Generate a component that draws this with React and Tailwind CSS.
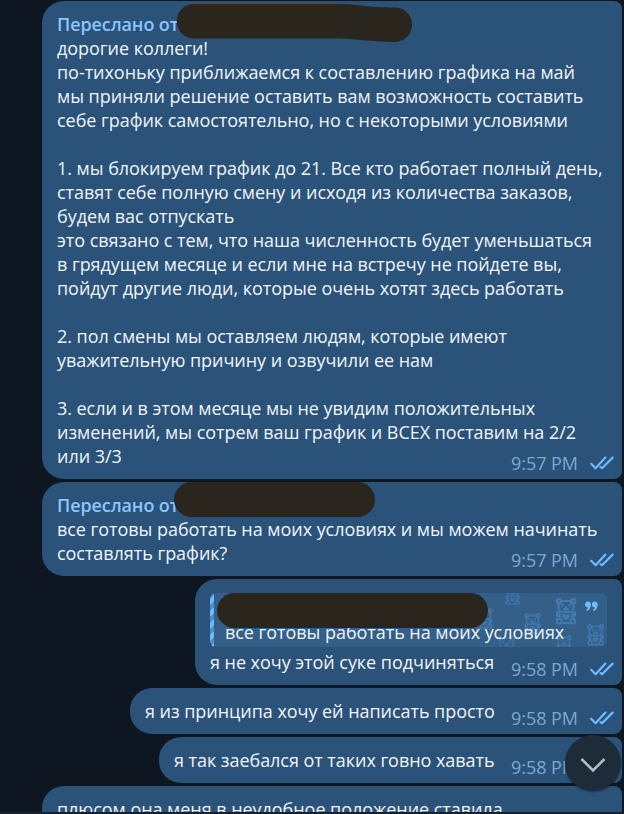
import React from "react";

const Checks = () => {
  return (
    <svg width="25" height="14" viewBox="0 0 25 14" fill="none">
      <path
        d="M1.200 7.800l4.400 4.400L15.400 1.600M10.600 11.200l1.400 1L22.600 1.600"
        stroke="#6cbcff"
        strokeWidth="2.2"
        strokeLinecap="round"
        strokeLinejoin="round"
      />
    </svg>
  );
};

const Meta = ({ time }) => {
  return (
    <div className="absolute right-[7px] bottom-[4px] flex items-center">
      <span className="w-[79px] text-[18px] tracking-[-0.05px] leading-6 text-[#7da8d3] whitespace-nowrap">
        {time}
      </span>
      <Checks />
    </div>
  );
};

// 20x27 teddy with a heart on its belly
const Bear = ({ x, y, s = 1, o = 1 }) => {
  return (
    <g transform={`translate(${x} ${y}) scale(${s})`} opacity={o}>
      <circle cx="3.500" cy="3.500" r="2.300" />
      <circle cx="17.500" cy="3.500" r="2.300" />
      <rect x="3" y="3" width="15" height="11" rx="4" />
      <path d="M4 15.500l-2.500-1.500v3.500l2.500 1M17 15.500l2.500-1.500v3.500l-2.500 1" />
      <path d="M4 15v6M17 15v6" />
      <rect x="1.500" y="20.500" width="4.500" height="5" rx="1.500" />
      <rect x="15" y="20.500" width="4.500" height="5" rx="1.500" />
      <path d="M6 25h9" />
      <path d="M7 7.200v.6M14 7.200v.6M8.500 11c1.300.8 2.700.8 4 0M10.500 9v1" />
      <path
        d="M10.500 22.500c-2.500-1.700-3.800-3-3.800-4.500 0-2.200 2.800-2.600 3.800-.8 1-1.800 3.800-1.400 3.800.8 0 1.500-1.300 2.800-3.800 4.500z"
        fill="#427bad"
        strokeWidth="0"
      />
    </g>
  );
};

const Redacted = ({ width, className }) => {
  return (
    <div
      className={`absolute h-[35px] rounded-full bg-[#2a261d] ${className}`}
      style={{ width }}
    />
  );
};

const Bubble = ({ width, forwarded, lines, time, children }) => {
  return (
    <div
      className="relative shrink-0 rounded-l-[22px] rounded-r-[8px] bg-[#2b5278] pl-[15px] py-[11px]"
      style={{ width }}>
      {forwarded && (
        <div className="font-semibold tracking-[-0.1px] text-[#8ac6ff] whitespace-nowrap">
          Переслано от
        </div>
      )}
      {children}
      {lines.map((line, i) => (
        <div key={i} className="h-6 whitespace-nowrap">
          {line}
        </div>
      ))}
      {time && <Meta time={time} />}
    </div>
  );
};

const first = [
  "дорогие коллеги!",
  "по-тихоньку приближаемся к составлению графика на май",
  "мы приняли решение оставить вам возможность составить",
  "себе график самостоятельно, но с некоторыми условиями",
  "",
  "1. мы блокируем график до 21. Все кто работает полный день,",
  "ставят себе полную смену и исходя из количества заказов,",
  "будем вас отпускать",
  "это связано с тем, что наша численность будет уменьшаться",
  "в грядущем месяце и если мне на встречу не пойдете вы,",
  "пойдут другие люди, которые очень хотят здесь работать",
  "",
  "2. пол смены мы оставляем людям, которые имеют",
  "уважительную причину и озвучили ее нам",
  "",
  "3. если и в этом месяце мы не увидим положительных",
  "изменений, мы сотрем ваш график и ВСЕХ поставим на 2/2",
  "или 3/3",
];

const App = () => {
  return (
    <div className="relative flex flex-col w-[624px] h-[814px] overflow-hidden bg-[#0e1621] font-['Open_Sans',sans-serif] text-[18px] leading-6 tracking-[-0.045px] text-[#f0f5fa]">
      <div className="flex flex-col items-end gap-[3px] h-[812px] overflow-hidden pt-px pr-[2px]">
        <Bubble width={580} forwarded lines={first} time="9:57 PM">
          <svg
            className="absolute left-[134px] top-[2px]"
            width="240"
            height="40"
            viewBox="0 0 240 40">
            <path
              d="M18 1H160c22 0 32 3.500 59 3.500a17.200 17.200 0 0 1 0 34.400c-26 0-42-3.400-56-3.400H18a17.250 17.250 0 0 1 0-34.500z"
              fill="#2a261d"
            />
          </svg>
        </Bubble>

        <Bubble
          width={580}
          forwarded
          lines={[
            "все готовы работать на моих условиях и мы можем начинать",
            "составлять график?",
          ]}
          time="9:57 PM">
          <Redacted width={201} className="left-[132px] top-0" />
        </Bubble>

        <Bubble
          width={427}
          lines={["я не хочу этой суке подчиняться"]}
          time="9:58 PM">
          <div className="relative mt-[3px] mb-[3px] h-[54px] w-[397px] overflow-hidden rounded-[6px] bg-[#335f89] pt-[27px] pl-[15px]">
            <svg
              className="absolute inset-0"
              width="397"
              height="54"
              viewBox="0 0 397 54"
              fill="none">
              <path d="M0 0h4v54H0z" fill="#4b8fc8" />
              <path
                d="M0 6l4-4v6l-4 4zM0 18l4-4v6l-4 4zM0 30l4-4v6l-4 4zM0 42l4-4v6l-4 4zM0 54l4-4v4z"
                fill="#6cbcff"
              />
              <g stroke="#427bad" strokeWidth="2.2" strokeLinejoin="round" strokeLinecap="round">
                <Bear x={295} y={-7} s={0.72} o={0.7} />
                <Bear x={345.5} y={5} s={1} o={1} />
                <Bear x={314} y={20} s={0.8} o={0.85} />
                <Bear x={266} y={15} s={0.8} o={0.8} />
                <Bear x={377} y={31} s={0.82} o={0.85} />
                <Bear x={346} y={42} s={0.75} o={0.8} />
                <Bear x={287} y={42} s={0.9} o={0.55} />
              </g>
              <path
                d="M378 8.500a2.900 2.900 0 0 1 2.900 2.900c0 3-1.200 5.300-3.700 6.500l-1-1.100c1.200-.8 1.800-1.700 1.900-2.500a2.900 2.900 0 0 1-.1-5.800zM384.700 8.500a2.900 2.900 0 0 1 2.900 2.900c0 3-1.200 5.300-3.700 6.500l-1-1.100c1.200-.8 1.800-1.700 1.900-2.500a2.900 2.900 0 0 1-.1-5.800z"
                fill="#6cbcff"
              />
            </svg>
            <div className="relative whitespace-nowrap">
              все готовы работать на моих условиях
            </div>
          </div>
          <Redacted width={271} className="left-[22px] top-[14px]" />
        </Bubble>

        <Bubble
          width={492}
          lines={["я из принципа хочу ей написать просто"]}
          time="9:58 PM"
        />
        <Bubble
          width={463}
          lines={["я так заебался от таких говно хавать"]}
          time="9:58 PM"
        />
        <Bubble
          width={580}
          lines={["плюсом она меня в неудобное положение ставила"]}
        />
      </div>
      <div className="h-[2px] bg-[#17212b]" />

      <button className="absolute left-[565px] top-[735px] flex size-[56px] items-center justify-center rounded-full bg-[#1e2c3a] pt-[4px] shadow-[0_1px_2px_rgba(0,0,0,0.4)]">
        <svg width="28" height="16" viewBox="0 0 28 16" fill="none">
          <path d="M2.500 2L14 13.500 25.500 2" stroke="#b6bdc4" strokeWidth="2.5" />
        </svg>
      </button>
    </div>
  );
};

export default App;
